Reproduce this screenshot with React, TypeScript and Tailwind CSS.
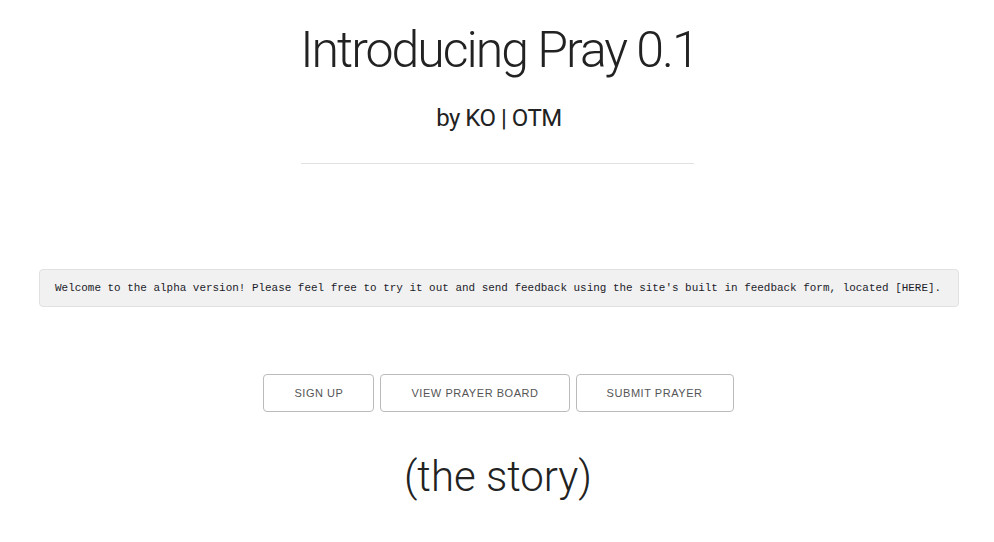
export default function App() {
  const buttons = ["Sign up", "View prayer board", "Submit prayer"];

  return (
    <div className="min-h-screen bg-white text-[#222] font-['Roboto',sans-serif]">
      <div className="flex flex-col items-center">
        <h1 className="mt-[20px] text-[50px] leading-[60px] font-light tracking-[-2px] pl-[4px]">
          Introducing Pray 0.1
        </h1>
        <h3 className="mt-[20px] text-[24px] leading-[36px] font-normal tracking-[-0.5px] pl-[4px]">
          by KO | OTM
        </h3>
        <hr className="mt-[27px] w-[393px] border-0 border-t border-[#E1E1E1]" />
      </div>

      <div className="mt-[105px] ml-[39px] mr-[35px]">
        <div className="h-[38px] flex items-center px-[15px] bg-[#F1F1F1] border border-[#E1E1E1] rounded-[4px]">
          <code className="font-['Liberation_Mono',monospace] text-[10.95px] text-[#1c1c2a] whitespace-nowrap">
            Welcome to the alpha version! Please feel free to try it out and send feedback using the site's built in feedback form, located [HERE].
          </code>
        </div>
      </div>

      <div className="mt-[67px] flex justify-center gap-[6px] pl-[3px]">
        {buttons.map((b) => (
          <button
            key={b}
            className="h-[38px] px-[30px] border border-[#bbb] rounded-[4px] bg-transparent text-[#555] text-[11px] uppercase tracking-[0.55px] font-['Liberation_Sans',sans-serif]"
          >
            {b}
          </button>
        ))}
      </div>

      <h2 className="mt-[40px] text-center text-[42px] leading-[50px] font-light tracking-[0px] pl-[2px]">
        (the story)
      </h2>
    </div>
  );
}
